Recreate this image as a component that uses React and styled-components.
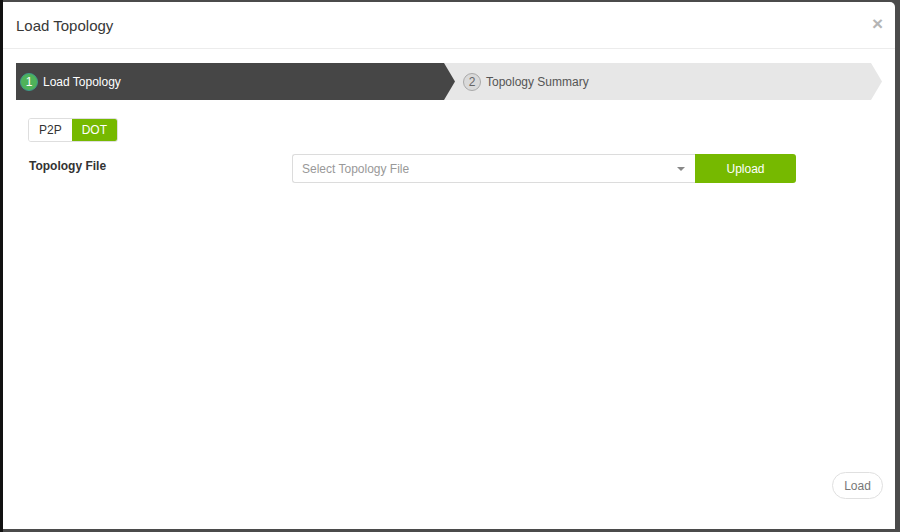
import React, { useState } from 'react'
import styled, { createGlobalStyle } from 'styled-components'

const Global = createGlobalStyle`
  html, body {
    margin: 0;
    padding: 0;
    background: #4b4b4b;
    font-family: "Liberation Sans", Arial, Helvetica, sans-serif;
  }
`

export default () => {
  const [ mode, setMode ] = useState('DOT')

  return(
  <>
    <Global />
    <Backdrop>
      <Modal>
        <Header>
          <Title>Load Topology</Title>
          <Close>×</Close>
        </Header>
        <Body>
          <Steps>
            <Step active>
              <StepNum active>1</StepNum>
              Load Topology
            </Step>
            <Step>
              <StepNum>2</StepNum>
              Topology Summary
            </Step>
          </Steps>
          <Form>
            <Toggle>
              <ToggleBtn on={mode === 'P2P'} onClick={() => setMode('P2P')}>P2P</ToggleBtn>
              <ToggleBtn on={mode === 'DOT'} onClick={() => setMode('DOT')}>DOT</ToggleBtn>
            </Toggle>
            <Row>
              <Label>Topology File</Label>
              <Select>
                <Placeholder>Select Topology File</Placeholder>
                <Caret />
              </Select>
              <Upload>Upload</Upload>
            </Row>
          </Form>
        </Body>
        <Footer>
          <LoadBtn>Load</LoadBtn>
        </Footer>
      </Modal>
    </Backdrop>
  </>
)}

const Backdrop = styled.div`
  height: 532px;
  padding: 2px 5px 3px 3px;
  box-sizing: border-box;
  background: linear-gradient(90deg, #111 0, #111 3px, #4b4b4b 3px);
`

const Modal = styled.div`
  height: 100%;
  background: #fff;
  border-radius: 0 5px 0 0;
  display: flex;
  flex-direction: column;
`

const Header = styled.div`
  height: 46px;
  border-bottom: 1px solid #ececec;
  display: flex;
  align-items: center;
  justify-content: space-between;
  padding: 0 12px 0 13px;
`

const Title = styled.h4`
  margin: 0;
  font-size: 15px;
  font-weight: normal;
  color: #383838;
`

const Close = styled.span`
  font-size: 19px;
  font-weight: bold;
  color: #b5b5b5;
  line-height: 1;
  margin-top: -4px;
`

const Body = styled.div`
  flex: 1;
  padding: 14px 13px 0 13px;
`

const Steps = styled.div`
  display: flex;
  height: 37px;
`

const Step = styled.div`
  position: relative;
  z-index: ${ props => props.active ? 1 : 0 };
  width: ${ props => props.active ? '439px' : '438px' };
  margin-left: ${ props => props.active ? '0' : '-11px' };
  padding-left: ${ props => props.active ? '4px' : '19px' };
  display: flex;
  align-items: center;
  gap: 5px;
  font-size: 12px;
  color: ${ props => props.active ? '#fff' : '#555' };
  background: ${ props => props.active ? '#464646' : '#e7e7e7' };
  box-sizing: border-box;
  clip-path: polygon(0 0, calc(100% - 11px) 0, 100% 50%, calc(100% - 11px) 100%, 0 100%);
`

const StepNum = styled.span`
  width: 16px;
  height: 16px;
  border-radius: 50%;
  display: inline-flex;
  align-items: center;
  justify-content: center;
  font-size: 12px;
  color: ${ props => props.active ? '#fff' : '#666' };
  background: ${ props => props.active ? '#4fb35a' : '#dadada' };
  border: 1px solid ${ props => props.active ? '#3d9a8a' : '#a9a9a9' };
`

const Form = styled.div`
  padding: 18px 0 0 12px;
`

const Toggle = styled.div`
  display: inline-flex;
  height: 24px;
  border: 1px solid #dedede;
  border-radius: 3px;
  overflow: hidden;
  box-sizing: border-box;
`

const ToggleBtn = styled.button`
  border: none;
  padding: 0 10px;
  font-family: inherit;
  font-size: 12px;
  color: ${ props => props.on ? '#fff' : '#333' };
  background: ${ props => props.on ? '#76b900' : '#fff' };
  cursor: pointer;
`

const Row = styled.div`
  display: grid;
  grid-template-columns: 264px 403px 101px;
  align-items: center;
  margin-top: 12px;
`

const Label = styled.label`
  font-size: 12px;
  font-weight: bold;
  color: #333;
  padding-left: 1px;
  margin-top: -5px;
`

const Select = styled.div`
  height: 29px;
  border: 1px solid #dcdcdc;
  border-right: none;
  border-radius: 3px 0 0 3px;
  display: flex;
  align-items: center;
  justify-content: space-between;
  padding: 0 10px 0 9px;
  box-sizing: border-box;
`

const Placeholder = styled.span`
  font-size: 12px;
  color: #999;
`

const Caret = styled.span`
  width: 0;
  height: 0;
  border-left: 4px solid transparent;
  border-right: 4px solid transparent;
  border-top: 4px solid #888;
`

const Upload = styled.button`
  height: 29px;
  border: none;
  border-radius: 0 3px 3px 0;
  background: #76b900;
  color: #fff;
  font-family: inherit;
  font-size: 12px;
`

const Footer = styled.div`
  display: flex;
  justify-content: flex-end;
  padding: 0 12px 30px 0;
`

const LoadBtn = styled.button`
  height: 27px;
  width: 51px;
  border: 1px solid #e0e0e0;
  border-radius: 14px;
  background: #fff;
  color: #777;
  font-family: inherit;
  font-size: 12px;
`
